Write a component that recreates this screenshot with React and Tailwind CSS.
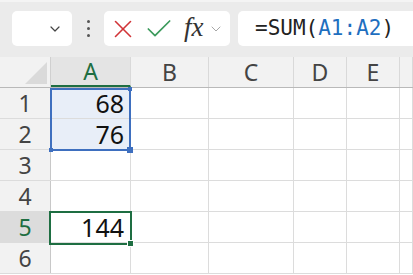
import { X, Check, ChevronDown } from "lucide-react";

const cols = [
  { id: "A", w: "w-[80px]" },
  { id: "B", w: "w-[78px]" },
  { id: "C", w: "w-[85px]" },
  { id: "D", w: "w-[53px]" },
  { id: "E", w: "w-[53px]" },
  { id: "", w: "flex-1" },
];

const rows = [
  { n: 1, a: "68" },
  { n: 2, a: "76" },
  { n: 3, a: "" },
  { n: 4, a: "" },
  { n: 5, a: "144" },
  { n: 6, a: "" },
];

function Toolbar() {
  return (
    <div className="h-[57px] bg-[#ebebeb] border-t-2 border-[#f4f4f4] flex items-start pt-[9px] pl-[12px]">
      <div className="w-[60px] h-[35px] bg-white rounded-[5px] flex items-center justify-end pr-[9px]">
        <ChevronDown size={16} strokeWidth={1.8} className="text-[#444]" />
      </div>
      <div className="w-[32px] h-[35px] flex flex-col items-center justify-center gap-[4px]">
        <span className="w-[3px] h-[3px] bg-[#555] rounded-full" />
        <span className="w-[3px] h-[3px] bg-[#555] rounded-full" />
        <span className="w-[3px] h-[3px] bg-[#555] rounded-full" />
      </div>
      <div className="w-[126px] h-[35px] bg-white rounded-[5px] flex items-center pl-[4px]">
        <X size={30} strokeWidth={1.3} className="text-[#d13438]" />
        <Check size={32} strokeWidth={1.3} className="text-[#3c9a5c] ml-[5px]" />
        <span className="ml-[9px] text-[27px] leading-none italic text-[#333] pb-[3px]" style={{ fontFamily: '"Liberation Serif", serif' }}>
          fx
        </span>
        <ChevronDown size={16} strokeWidth={1.3} className="text-[#999] ml-[4px]" />
      </div>
      <div className="flex-1 ml-[8px] h-[35px] bg-white rounded-l-[5px] flex items-center pl-[17px] text-[21px] text-[#222]" style={{ fontFamily: '"DejaVu Sans Mono", monospace' }}>
        =SUM(<span className="text-[#1f6fbf]">A1:A2</span>)
      </div>
    </div>
  );
}

function Grid() {
  return (
    <div className="relative font-['Noto_Sans',sans-serif]">
      <div className="flex h-[31px] bg-[#f2f2f2] border-b border-[#b9b9b9]">
        <div className="w-[51px] relative border-r border-[#d0d0d0]">
          <svg className="absolute right-[3px] bottom-[3px]" width="22" height="22">
            <polygon points="22,0 22,22 0,22" fill="#dadada" />
          </svg>
        </div>
        {cols.map((c) => (
          <div
            key={c.w}
            className={`${c.w} border-r border-[#d9d9d9] flex items-center justify-center text-[23px] leading-none ${
              c.id === "A" ? "bg-[#e4e4e4] text-[#1e6e42] border-b-2 border-b-[#1e6e42]" : "text-[#444]"
            }`}
          >
            {c.id}
          </div>
        ))}
      </div>
      {rows.map((r) => (
        <div key={r.n} className="flex h-[31px] border-b border-[#dcdcdc]">
          <div
            className={`w-[51px] flex items-center justify-center text-[23px] leading-none border-r border-[#c8c8c8] ${
              r.n === 5 ? "bg-[#dcdcdc] text-[#1e6e42]" : "bg-[#f2f2f2] text-[#444]"
            }`}
          >
            {r.n}
          </div>
          {cols.map((c) => (
            <div
              key={c.w}
              className={`${c.w} border-r border-[#dcdcdc] flex items-center justify-end pr-[6px] text-[25px] leading-none text-[#111] ${
                c.id === "A" && r.n <= 2 ? "bg-[#e8eef8]" : "bg-white"
              }`}
            >
              {c.id === "A" ? r.a : ""}
            </div>
          ))}
        </div>
      ))}
      <div className="absolute left-[50px] top-[31px] w-[81px] h-[63px] border-2 border-[#3e6fbf] pointer-events-none">
        <span className="absolute -right-[4px] -bottom-[4px] w-[6px] h-[6px] bg-[#3e6fbf]" />
        <span className="absolute -left-[3px] -bottom-[3px] w-[4px] h-[4px] bg-[#3e6fbf]" />
        <span className="absolute -right-[3px] -top-[3px] w-[4px] h-[4px] bg-[#3e6fbf]" />
      </div>
      <div className="absolute left-[49px] top-[154px] w-[83px] h-[34px] border-2 border-[#1e6e42] pointer-events-none">
        <span className="absolute -right-[4px] -bottom-[4px] w-[7px] h-[7px] bg-[#1e6e42] border border-white" />
      </div>
    </div>
  );
}

export default function App() {
  return (
    <div className="w-[413px] h-[275px] overflow-hidden bg-white">
      <Toolbar />
      <Grid />
    </div>
  );
}
